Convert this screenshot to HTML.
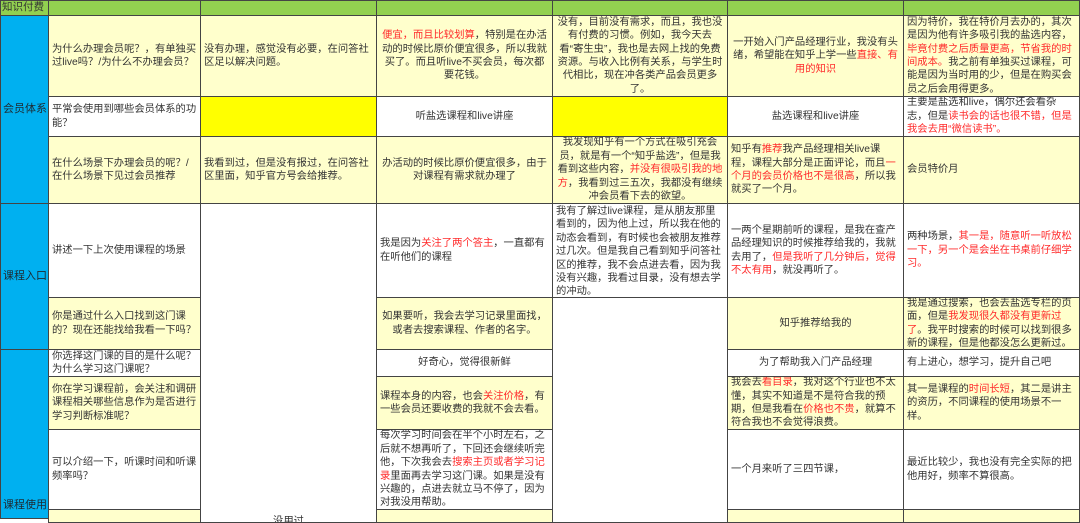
<!DOCTYPE html>
<html><head><meta charset="utf-8"><style>
body{margin:0;width:1080px;height:513px;overflow:hidden;background:#fff;font-family:"Liberation Sans","Noto Sans CJK SC",sans-serif;font-size:10.3px;color:#333;}
.c{position:absolute;box-sizing:border-box;border:1px solid #444;display:flex;align-items:center;overflow:hidden;padding:0 3px;line-height:13.4px;}
.c>div{width:100%}
.t{align-items:flex-start;padding-top:1px}
.l{text-align:left}.m{text-align:center}
.y{background:#ffffcc}.Y{background:#ffff00}.w{background:#fff}.b{background:#00b0f0;color:#1d2b33;font-size:11px;white-space:nowrap}.g{background:#92d050}
.r{color:#ff2a2a}
</style></head><body>
<!-- header -->
<div class="c g" style="left:0;top:0;width:49px;height:16px;padding:0 1px;white-space:nowrap;font-size:10.5px"><div>知识付费</div></div>
<div class="c g" style="left:48px;top:0;width:153px;height:16px"></div>
<div class="c g" style="left:200px;top:0;width:177px;height:16px"></div>
<div class="c g" style="left:376px;top:0;width:177px;height:16px"></div>
<div class="c g" style="left:552px;top:0;width:176px;height:16px"></div>
<div class="c g" style="left:727px;top:0;width:177px;height:16px"></div>
<div class="c g" style="left:903px;top:0;width:177px;height:16px"></div>
<!-- col A -->
<div class="c b" style="left:0;top:15px;width:49px;height:189px;padding:0 2px"><div>会员体系</div></div>
<div class="c b" style="left:0;top:203px;width:49px;height:147px;padding:0 2px"><div>课程入口</div></div>
<div class="c b" style="left:0;top:349px;width:49px;height:170px;padding:0 2px;align-items:flex-end"><div style="padding-bottom:6px">课程使用</div></div>
<!-- row1 -->
<div class="c y l" style="left:48px;top:15px;width:153px;height:82px"><div>为什么办理会员呢？，有单独买过live吗？/为什么不办理会员？</div></div>
<div class="c y l" style="left:200px;top:15px;width:177px;height:82px"><div>没有办理，感觉没有必要，在问答社区足以解决问题。</div></div>
<div class="c y m" style="left:376px;top:15px;width:177px;height:82px"><div><span class="r">便宜，而且比较划算</span>，特别是在办活动的时候比原价便宜很多，所以我就买了。而且听live不买会员，每次都要花钱。</div></div>
<div class="c y m" style="left:552px;top:15px;width:176px;height:82px"><div>没有，目前没有需求，而且，我也没有付费的习惯。例如，我今天去看“寄生虫”，我也是去网上找的免费资源。与收入比例有关系，与学生时代相比，现在冲各类产品会员更多了。</div></div>
<div class="c y m" style="left:727px;top:15px;width:177px;height:82px"><div>一开始入门产品经理行业，我没有头绪，希望能在知乎上学一些<span class="r">直接、有用的知识</span></div></div>
<div class="c y l" style="left:903px;top:15px;width:177px;height:82px"><div>因为特价，我在特价月去办的，其次是因为他有许多吸引我的盐选内容，<span class="r">毕竟付费之后质量更高，节省我的时间成本。</span>我之前有单独买过课程，可能是因为当时用的少，但是在购买会员之后会用得更多。</div></div>
<!-- row2 -->
<div class="c w l" style="left:48px;top:96px;width:153px;height:41px"><div>平常会使用到哪些会员体系的功能？</div></div>
<div class="c Y" style="left:200px;top:96px;width:177px;height:41px"></div>
<div class="c w m" style="left:376px;top:96px;width:177px;height:41px"><div>听盐选课程和live讲座</div></div>
<div class="c Y" style="left:552px;top:96px;width:176px;height:41px"></div>
<div class="c w m" style="left:727px;top:96px;width:177px;height:41px"><div>盐选课程和live讲座</div></div>
<div class="c w l" style="left:903px;top:96px;width:177px;height:41px"><div>主要是盐选和live，偶尔还会看杂志，但是<span class="r">读书会的话也很不错，但是我会去用“微信读书”。</span></div></div>
<!-- row3 -->
<div class="c y l" style="left:48px;top:136px;width:153px;height:68px"><div>在什么场景下办理会员的呢？/在什么场景下见过会员推荐</div></div>
<div class="c y l" style="left:200px;top:136px;width:177px;height:68px"><div>我看到过，但是没有报过，在问答社区里面，知乎官方号会给推荐。</div></div>
<div class="c y m" style="left:376px;top:136px;width:177px;height:68px"><div>办活动的时候比原价便宜很多，由于对课程有需求就办理了</div></div>
<div class="c y m" style="left:552px;top:136px;width:176px;height:68px"><div>我发现知乎有一个方式在吸引充会员，就是有一个“知乎盐选”，但是我看到这些内容，<span class="r">并没有很吸引我的地方</span>，我看到过三五次，我都没有继续冲会员看下去的欲望。</div></div>
<div class="c y l" style="left:727px;top:136px;width:177px;height:68px"><div>知乎有<span class="r">推荐</span>我产品经理相关live课程，课程大部分是正面评论，而且<span class="r">一个月的会员价格也不是很高</span>，所以我就买了一个月。</div></div>
<div class="c y l" style="left:903px;top:136px;width:177px;height:68px"><div>会员特价月</div></div>
<!-- row4 -->
<div class="c w l" style="left:48px;top:203px;width:153px;height:95px"><div>讲述一下上次使用课程的场景</div></div>
<div class="c w m" style="left:200px;top:203px;width:177px;height:320px;align-items:flex-end"><div style="margin-bottom:-6px">没用过</div></div>
<div class="c w l" style="left:376px;top:203px;width:177px;height:95px"><div>我是因为<span class="r">关注了两个答主</span>，一直都有在听他们的课程</div></div>
<div class="c w l t" style="left:552px;top:203px;width:176px;height:95px"><div>我有了解过live课程，是从朋友那里看到的，因为他上过，所以我在他的动态会看到，有时候也会被朋友推荐过几次。但是我自己看到知乎问答社区的推荐，我不会点进去看，因为我没有兴趣，我看过目录，没有想去学的冲动。</div></div>
<div class="c w l" style="left:727px;top:203px;width:177px;height:95px"><div>一两个星期前听的课程，是我在查产品经理知识的时候推荐给我的，我就去用了，<span class="r">但是我听了几分钟后，觉得不太有用</span>，就没再听了。</div></div>
<div class="c w l" style="left:903px;top:203px;width:177px;height:95px"><div>两种场景，<span class="r">其一是，随意听一听放松一下，另一个是会坐在书桌前仔细学习。</span></div></div>
<!-- row5 -->
<div class="c y l" style="left:48px;top:297px;width:153px;height:53px"><div>你是通过什么入口找到这门课的？现在还能找给我看一下吗？</div></div>
<div class="c y m" style="left:376px;top:297px;width:177px;height:53px"><div>如果要听，我会去学习记录里面找，或者去搜索课程、作者的名字。</div></div>
<div class="c w" style="left:552px;top:297px;width:176px;height:226px"></div>
<div class="c y m" style="left:727px;top:297px;width:177px;height:53px"><div>知乎推荐给我的</div></div>
<div class="c y l" style="left:903px;top:297px;width:177px;height:53px"><div>我是通过搜索，也会去盐选专栏的页面，但是<span class="r">我发现很久都没有更新过了</span>。我平时搜索的时候可以找到很多新的课程，但是他都没怎么更新过。</div></div>
<!-- row6 -->
<div class="c w l" style="left:48px;top:349px;width:153px;height:28px"><div>你选择这门课的目的是什么呢？为什么学习这门课呢？</div></div>
<div class="c w m" style="left:376px;top:349px;width:177px;height:28px"><div>好奇心，觉得很新鲜</div></div>
<div class="c w m" style="left:727px;top:349px;width:177px;height:28px"><div>为了帮助我入门产品经理</div></div>
<div class="c w l" style="left:903px;top:349px;width:177px;height:28px"><div>有上进心，想学习，提升自己吧</div></div>
<!-- row7 -->
<div class="c y l" style="left:48px;top:376px;width:153px;height:54px"><div>你在学习课程前，会关注和调研课程相关哪些信息作为是否进行学习判断标准呢？</div></div>
<div class="c y l" style="left:376px;top:376px;width:177px;height:54px"><div>课程本身的内容，也会<span class="r">关注价格</span>，有一些会员还要收费的我就不会去看。</div></div>
<div class="c y l" style="left:727px;top:376px;width:177px;height:54px"><div>我会去<span class="r">看目录</span>，我对这个行业也不太懂，其实不知道是不是符合我的预期，但是我看在<span class="r">价格也不贵</span>，就算不符合我也不会觉得浪费。</div></div>
<div class="c y l" style="left:903px;top:376px;width:177px;height:54px"><div>其一是课程的<span class="r">时间长短</span>，其二是讲主的资历，不同课程的使用场景不一样。</div></div>
<!-- row8 -->
<div class="c w l" style="left:48px;top:429px;width:153px;height:81px"><div>可以介绍一下，听课时间和听课频率吗？</div></div>
<div class="c w l" style="left:376px;top:429px;width:177px;height:81px"><div>每次学习时间会在半个小时左右，之后就不想再听了，下回还会继续听完他，下次我会去<span class="r">搜索主页或者学习记录</span>里面再去学习这门课。如果是没有兴趣的，点进去就立马不停了，因为对我没用帮助。</div></div>
<div class="c w l" style="left:727px;top:429px;width:177px;height:81px"><div>一个月来听了三四节课，</div></div>
<div class="c w l" style="left:903px;top:429px;width:177px;height:81px"><div>最近比较少，我也没有完全实际的把他用好，频率不算很高。</div></div>
<!-- row9 -->
<div class="c y" style="left:48px;top:509px;width:153px;height:14px"></div>
<div class="c y" style="left:376px;top:509px;width:177px;height:14px"></div>
<div class="c y" style="left:727px;top:509px;width:177px;height:14px"></div>
<div class="c y" style="left:903px;top:509px;width:177px;height:14px"></div>
</body></html>
